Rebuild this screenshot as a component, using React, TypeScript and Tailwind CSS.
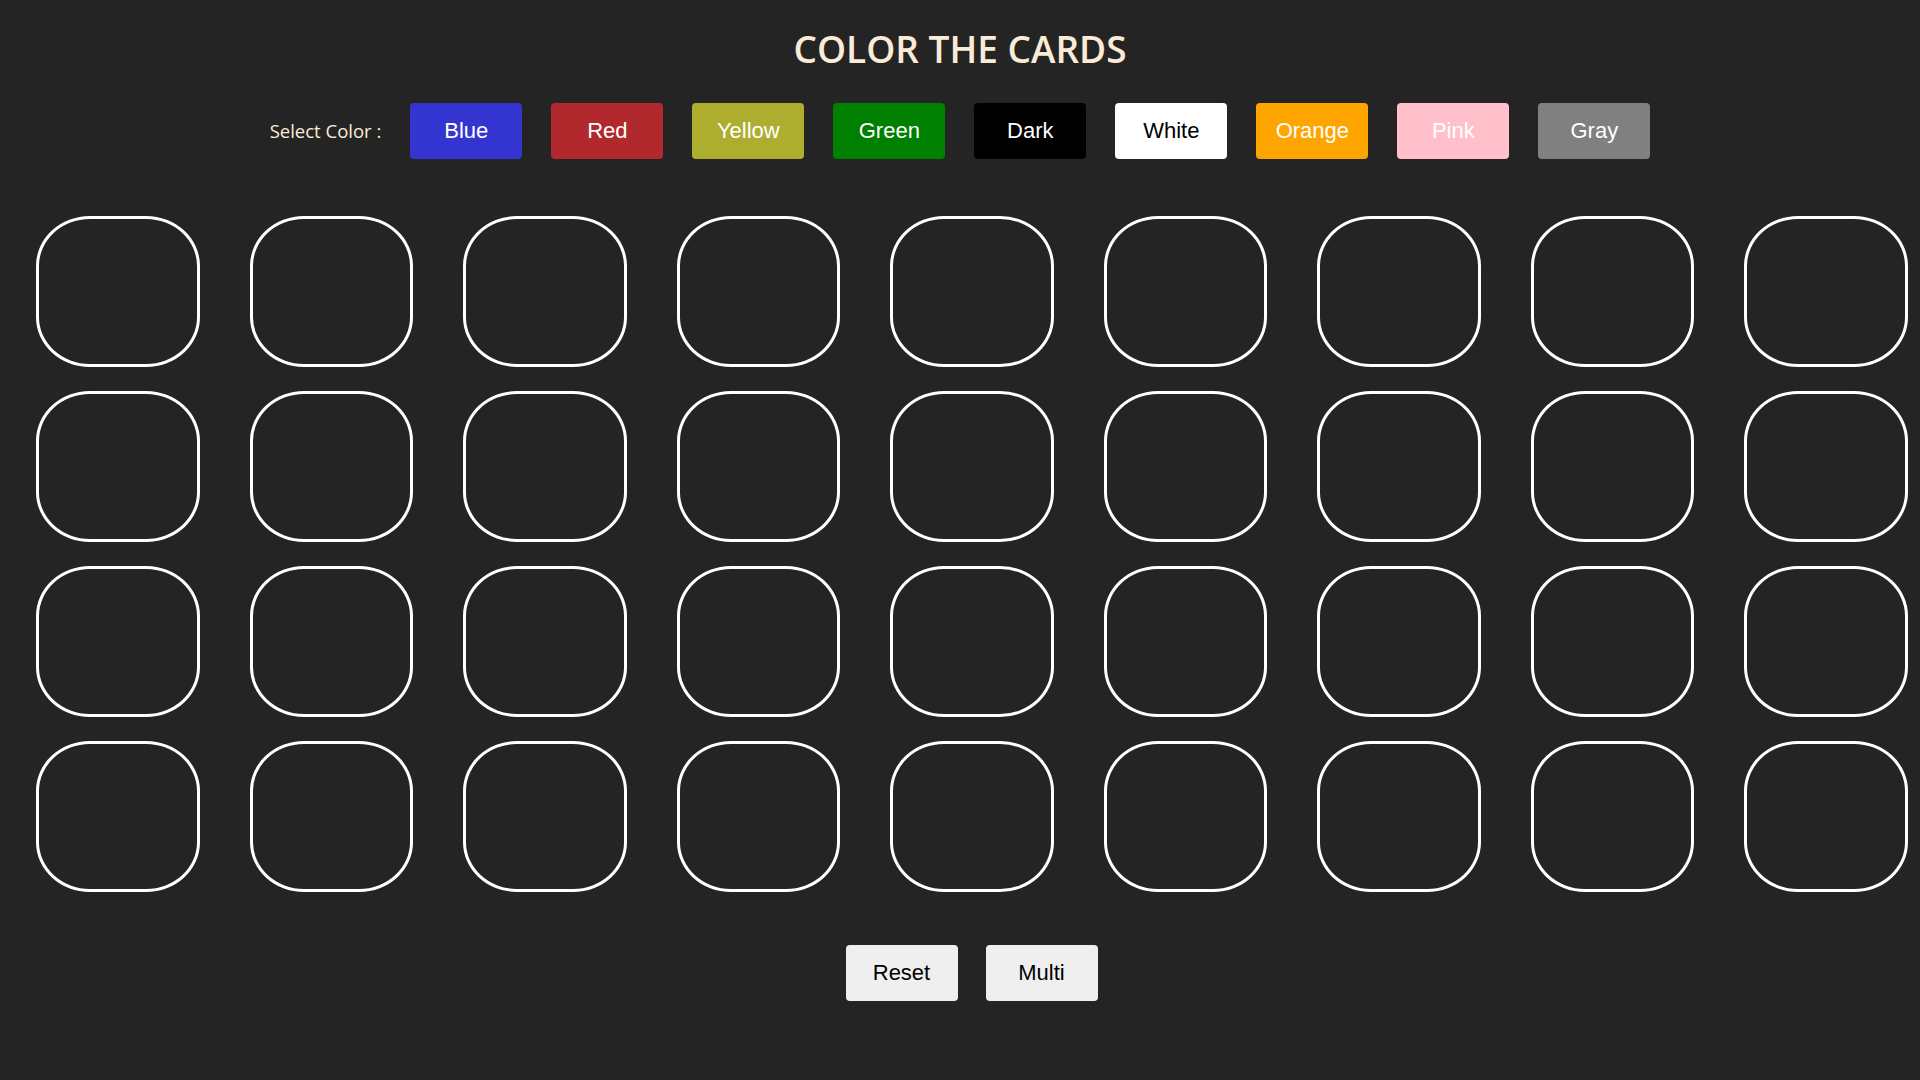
import { useState } from "react";

const COLORS = [
  { name: "Blue", bg: "bg-[#3434d1]", text: "text-white", value: "#3434d1" },
  { name: "Red", bg: "bg-[#b2292d]", text: "text-white", value: "#b2292d" },
  { name: "Yellow", bg: "bg-[#adae2f]", text: "text-white", value: "#adae2f" },
  { name: "Green", bg: "bg-[#008000]", text: "text-white", value: "#008000" },
  { name: "Dark", bg: "bg-black", text: "text-white", value: "#000000" },
  { name: "White", bg: "bg-white", text: "text-black", value: "#ffffff" },
  { name: "Orange", bg: "bg-[#ffa500]", text: "text-white", value: "#ffa500" },
  { name: "Pink", bg: "bg-[#ffc0cb]", text: "text-white", value: "#ffc0cb" },
  { name: "Gray", bg: "bg-[#808080]", text: "text-white", value: "#808080" },
];

const CARD_COUNT = 36;

const btn =
  "h-[56px] w-[112px] rounded-[4px] pb-[2px] text-[22px] font-['Liberation_Sans',Arial,sans-serif]";

export default function App() {
  const [selected, setSelected] = useState<string | null>(null);
  const [multi, setMulti] = useState(false);
  const [cards, setCards] = useState<(string | null)[]>(Array(CARD_COUNT).fill(null));

  const paint = (i: number) => {
    const pick = multi
      ? COLORS[Math.floor(Math.random() * COLORS.length)].value
      : selected;
    if (!pick) return;
    setCards((prev) => prev.map((c, j) => (j === i ? pick : c)));
  };

  return (
    <div className="min-h-screen w-full bg-[#242424]">
      <h1 className="pt-[24px] text-center font-['Open_Sans',sans-serif] text-[37px] leading-[49px] font-semibold text-[#faebd7]">
        COLOR THE CARDS
      </h1>

      <div className="mt-[30px] flex items-center justify-center gap-[29px]">
        <span className="font-['Open_Sans',sans-serif] text-[18.5px] text-[#faebd7]">
          Select Color :
        </span>
        {COLORS.map((c) => (
          <button
            key={c.name}
            onClick={() => {
              setSelected(c.value);
              setMulti(false);
            }}
            className={`${btn} ${c.bg} ${c.text}`}
          >
            {c.name}
          </button>
        ))}
      </div>

      <div className="mt-[57px] grid grid-cols-[repeat(9,163.5px)] gap-x-[50px] gap-y-[24px] pl-[36px]">
        {cards.map((c, i) => (
          <div
            key={i}
            onClick={() => paint(i)}
            className="h-[151px] w-[163.5px] cursor-pointer rounded-[33%] border-[3px] border-white"
            style={c ? { backgroundColor: c } : undefined}
          />
        ))}
      </div>

      <div className="mt-[53px] flex justify-center gap-[28px] pl-[23px]">
        <button
          onClick={() => {
            setCards(Array(CARD_COUNT).fill(null));
            setMulti(false);
          }}
          className={`${btn} bg-[#efefef] text-black`}
        >
          Reset
        </button>
        <button onClick={() => setMulti(true)} className={`${btn} bg-[#efefef] text-black`}>
          Multi
        </button>
      </div>
    </div>
  );
}
